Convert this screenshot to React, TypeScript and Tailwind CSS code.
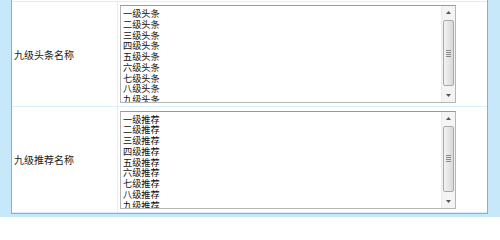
const headlines = ["一级头条", "二级头条", "三级头条", "四级头条", "五级头条", "六级头条", "七级头条", "八级头条", "九级头条"]
const picks = ["一级推荐", "二级推荐", "三级推荐", "四级推荐", "五级推荐", "六级推荐", "七级推荐", "八级推荐", "九级推荐"]

const font = { fontFamily: '"Noto Sans CJK SC", "Noto Sans", sans-serif' }

const Scrollbar = () => (
    <div className="flex h-full w-[14px] flex-col bg-[#f4f4f4] border-l border-[#ececec]">
        {/* up arrow */}
        <div className="flex h-[13px] items-center justify-center">
            <svg width="5" height="3" viewBox="0 0 5 3"><path d="M0 3 L2.5 0 L5 3 Z" fill="#555" /></svg>
        </div>
        {/* thumb */}
        <div className="mx-[1px] mt-[1px] flex h-[66px] items-center justify-center rounded-[2px] border border-[#a9a9a9] bg-gradient-to-r from-[#f2f2f2] to-[#d9d9d9]">
            <div className="flex flex-col gap-[1px]">
                <div className="h-px w-[5px] bg-[#8a8a8a]" />
                <div className="h-px w-[5px] bg-[#8a8a8a]" />
                <div className="h-px w-[5px] bg-[#8a8a8a]" />
                <div className="h-px w-[5px] bg-[#8a8a8a]" />
            </div>
        </div>
        <div className="flex-1" />
        {/* down arrow */}
        <div className="flex h-[13px] items-center justify-center">
            <svg width="5" height="3" viewBox="0 0 5 3"><path d="M0 0 L2.5 3 L5 0 Z" fill="#555" /></svg>
        </div>
    </div>
)

const ListBox = ({ items }: { items: string[] }) => (
    <div className="flex h-[98px] w-[336px] border border-[#b5b5b5] border-t-[#9a9a9a] bg-white">
        <div className="flex-1 overflow-hidden pl-[2px] pt-[2px] text-[9.2px] leading-[10.75px] text-[#111]" style={font}>
            {items.map((item) => (
                <div key={item}>{item}</div>
            ))}
        </div>
        <Scrollbar />
    </div>
)

const Row = ({ label, items, height }: { label: string; items: string[]; height: string }) => (
    <div className={`flex border-t border-[#d9f0f8] ${height}`}>
        <div className="flex w-[106px] items-center border-r border-[#d9f0f8] pl-[2px] text-[10px] text-[#222]" style={font}>
            {label}
        </div>
        <div className="flex items-center pl-[2px]">
            <ListBox items={items} />
        </div>
    </div>
)

export default function App() {
    return (
        <div className="h-[217px] w-[500px] overflow-hidden bg-[#c6e8f8] pl-[11px] pr-[12px]">
            <div className="border-x border-b border-[#6bbde0] bg-white pt-[1px]">
                <Row label="九级头条名称" items={headlines} height="h-[105px]" />
                <Row label="九级推荐名称" items={picks} height="h-[106px]" />
                <div className="border-t border-[#d9f0f8]" />
            </div>
        </div>
    )
}
